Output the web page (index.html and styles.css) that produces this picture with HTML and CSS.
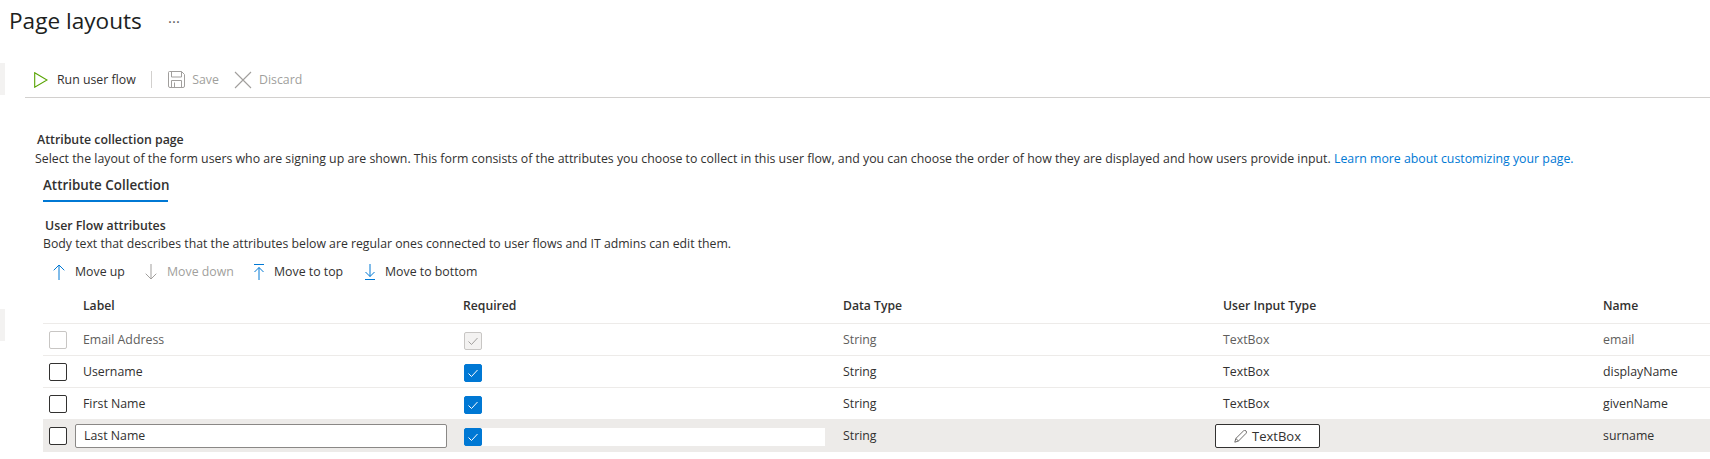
FILE: index.html
```html
<!DOCTYPE html>
<html lang="en">
<head>
<meta charset="utf-8">
<title>Page layouts</title>
<link rel="stylesheet" href="styles.css">
</head>
<body>
<div class="page">
  <aside class="rail"><div class="stub stub-first"></div><div class="stub"></div></aside>
  <main class="main">
    <header class="title-row"><h1 class="title">Page layouts</h1><span class="more">···</span></header>
    <div class="toolbar">
      <button class="tool tool-run"><svg class="ico-run" width="14" height="16" viewBox="0 0 14 16"><path d="M.7.8 13 8 .7 15.2Z" fill="none" stroke="#57a300" stroke-width="1.1"/></svg><span>Run user flow</span></button>
      <span class="tool-sep"></span>
      <button class="tool tool-off tool-save"><svg width="17" height="17" viewBox="0 0 17 17" fill="none" stroke="#a19f9d"><path d="M1.5.5h12l3 3v11.5a1.5 1.5 0 0 1-1.500 1.500H2A1.500 1.500 0 0 1 .5 15V1.500a1 1 0 0 1 1-1Z"/><path d="M3.500.5v5.500h10V.5M3.500 16.500v-7h10v7M6.500 11.500v5"/></svg><span>Save</span></button>
      <button class="tool tool-off tool-discard"><svg width="18" height="18" viewBox="0 0 18 18" fill="none" stroke="#a19f9d" stroke-width="1.100"><path d="M1 1 17 17M17 1 1 17"/></svg><span>Discard</span></button>
    </div>
    <section class="content">
      <h2 class="heading heading-page">Attribute collection page</h2>
      <p class="desc">Select the layout of the form users who are signing up are shown. This form consists of the attributes you choose to collect in this user flow, and you can choose the order of how they are displayed and how users provide input. <a class="link" href="#">Learn more about customizing your page.</a></p>
      <div class="tabs"><span class="tab">Attribute Collection</span></div>
      <h3 class="heading heading-flow">User Flow attributes</h3>
      <p class="body-text">Body text that describes that the attributes below are regular ones connected to user flows and IT admins can edit them.</p>
      <div class="moves">
        <button class="move move-up"><svg width="12" height="16" viewBox="0 0 12 16" fill="none" stroke="#0078d4"><path d="M6 16V1M.7 6.300 6 1l5.300 5.300"/></svg><span>Move up</span></button>
        <button class="move move-off move-down"><svg width="12" height="16" viewBox="0 0 12 16" fill="none" stroke="#a19f9d"><path d="M6 0v15M.7 9.700 6 15l5.300-5.300"/></svg><span>Move down</span></button>
        <button class="move move-top"><svg width="12" height="16" viewBox="0 0 12 16" fill="none" stroke="#0078d4"><path d="M1 .5h10M6 16V3.500M1.500 8 6 3.500 10.500 8"/></svg><span>Move to top</span></button>
        <button class="move move-bottom"><svg width="12" height="16" viewBox="0 0 12 16" fill="none" stroke="#0078d4"><path d="M6 0v12.500M1.500 8 6 12.500 10.500 8M1 15.500h10"/></svg><span>Move to bottom</span></button>
      </div>
      <div class="table">
        <div class="row row-head"><span></span><span>Label</span><span>Required</span><span>Data Type</span><span>User Input Type</span><span>Name</span></div>
        <div class="row row-off">
          <span><i class="box box-off"></i></span><span>Email Address</span>
          <span><i class="box box-req box-req-off"><svg width="16" height="16" viewBox="0 0 16 16" fill="none" stroke="#a19f9d"><path d="m3.500 8.500 3 3 6-6.500"/></svg></i></span>
          <span>String</span><span>TextBox</span><span>email</span>
        </div>
        <div class="row">
          <span><i class="box"></i></span><span>Username</span>
          <span><i class="box box-req box-on"><svg width="16" height="16" viewBox="0 0 16 16" fill="none" stroke="#fff"><path d="m3.500 8.500 3 3 6-6.500"/></svg></i></span>
          <span>String</span><span>TextBox</span><span>displayName</span>
        </div>
        <div class="row">
          <span><i class="box"></i></span><span>First Name</span>
          <span><i class="box box-req box-on"><svg width="16" height="16" viewBox="0 0 16 16" fill="none" stroke="#fff"><path d="m3.500 8.500 3 3 6-6.500"/></svg></i></span>
          <span>String</span><span>TextBox</span><span>givenName</span>
        </div>
        <div class="row row-edit">
          <span><i class="box"></i></span>
          <span><span class="field">Last Name</span></span>
          <span class="req-cell"><i class="box box-req box-on"><svg width="16" height="16" viewBox="0 0 16 16" fill="none" stroke="#fff"><path d="m3.500 8.500 3 3 6-6.500"/></svg></i><span class="stripe"></span></span>
          <span>String</span>
          <span><span class="edit-btn"><svg width="13" height="13" viewBox="0 0 13 13" fill="none" stroke="#605e5c" stroke-width=".9"><path d="M.8 12.200 1.800 8.500 9.500.9a1.500 1.500 0 0 1 2.500 2.500L4.500 11Zm1-3.700 2.700 2.500"/></svg>TextBox</span></span>
          <span>surname</span>
        </div>
      </div>
    </section>
  </main>
</div>
</body>
</html>
```
FILE: styles.css
```css
* { box-sizing: border-box; }
html, body { margin: 0; padding: 0; }
body {
  background: #fff;
  color: #323130;
  font-family: "Open Sans", "Noto Sans", "Liberation Sans", sans-serif;
  font-size: 12.33px;
  line-height: 18px;
  overflow: hidden;
}
.page { display: flex; width: 1710px; height: 459px; }
.rail { width: 5px; flex: none; padding-top: 63px; }
.stub { height: 32px; background: #f3f2f1; }
.stub-first { margin-bottom: 214px; }
.main { flex: 1; min-width: 0; }

.title-row { display: flex; align-items: center; height: 40px; padding: 1px 0 0 4px; }
.title { margin: 0; font-size: 22.6px; line-height: 40px; font-weight: 400; color: #201f1e; width: 159px; white-space: nowrap; }
.more { font-size: 15px; color: #605e5c; letter-spacing: 0; }

.toolbar { display: flex; align-items: center; height: 35px; margin: 23px 0 0 20px; border-bottom: 1px solid #d2d0ce; padding: 0 0 1px 9px; }
.tool, .move { display: inline-flex; align-items: center; padding: 0; border: 0; background: none; font: inherit; color: inherit; white-space: nowrap; }
.tool svg { flex: none; }
.tool-run span { margin-left: 9px; width: 78px; }
.tool-sep { width: 1px; height: 17px; background: #d2d0ce; margin: 0 16px; }
.tool-off { color: #a19f9d; }
.tool-save span { margin-left: 7px; width: 27px; }
.tool-discard { margin-left: 15px; }
.tool-discard span { margin-left: 7px; }

.content { padding-left: 30px; }
.heading { margin: 0; font-size: 12.33px; line-height: 18px; font-weight: 600; }
.heading-page { margin: 33px 0 0 2px; }
.desc { margin: 1px 0 0; white-space: nowrap; }
.link { color: #0078d4; text-decoration: none; }
.tabs { display: flex; margin: 8px 0 0 8px; }
.tab { font-size: 13.4px; font-weight: 600; padding-bottom: 6px; border-bottom: 2px solid #0078d4; width: 125px; white-space: nowrap; }
.heading-flow { margin: 15px 0 0 10px; }
.body-text { margin: 0 0 0 8px; font-size: 12.27px; white-space: nowrap; }

.moves { display: flex; height: 26px; margin: 6px 0 0 18px; align-items: center; }
.move svg { flex: none; margin-right: 10px; }
.move-off { color: #a19f9d; }
.move-up { width: 92px; }
.move-down { width: 108px; }
.move-top { width: 111px; }
.move-top svg { margin-right: 9px; }
.move-bottom svg { margin-right: 9px; }

.table { margin-left: 8px; }
.row {
  display: grid;
  grid-template-columns: 40px 380px 380px 380px 380px 1fr;
  height: 32px;
  padding-top: 7px;
  border-bottom: 1px solid #edebe9;
  white-space: nowrap;
}
.row-head { height: 39px; padding-top: 12px; font-size: 12.2px; font-weight: 600; }
.row-off { color: #605e5c; }
.row-edit { height: 32px; padding-top: 7px; background: #edebe9; border-bottom: 0; }

.box { display: block; width: 18px; height: 18px; margin: 0 0 0 6px; border: 1px solid #323130; border-radius: 2px; background: #fff; }
.box-off { border-color: #c8c6c4; }
.box-req { margin: 1px 0 0 1px; display: flex; align-items: center; justify-content: center; }
.box-req-off { border-color: #c8c6c4; background: #f3f2f1; }
.box-on { background: #0078d4; border-color: #0078d4; }
.req-cell { display: flex; align-items: flex-start; }
.stripe { width: 343px; height: 18px; margin-top: 1px; background: #fff; }
.field { display: block; width: 372px; height: 24px; margin: -3px 0 0 -8px; padding-left: 8px; line-height: 22px; background: #fff; border: 1px solid #8a8886; border-radius: 2px; }
.edit-btn { display: flex; align-items: center; justify-content: center; gap: 5px; width: 105px; height: 24px; margin: -3px 0 0 -8px; font-size: 13px; background: #fff; border: 1px solid #323130; border-radius: 2px; }
```
